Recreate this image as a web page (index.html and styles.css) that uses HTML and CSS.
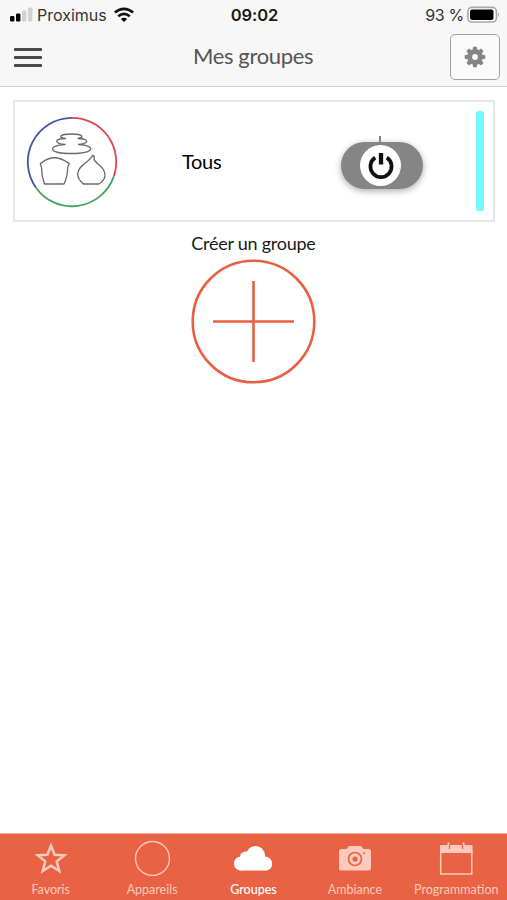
FILE: index.html
```html
<!DOCTYPE html>
<html lang="fr">
<head>
<meta charset="utf-8">
<title>Mes groupes</title>
<link rel="stylesheet" href="styles.css">
</head>
<body>
<header class="header">
  <div class="status">
    <div class="carrier">
      <svg width="25" height="16" viewBox="0 0 25 16"><rect x="1" y="9" width="4.4" height="5.5" rx="1.2"/><rect x="7" y="6.5" width="4.4" height="8" rx="1.2"/><rect class="dim" x="13" y="3.5" width="4.4" height="11" rx="1.2"/><rect class="dim" x="19" y="0.5" width="4.4" height="14" rx="1.2"/></svg>
      <span class="carrier-name">Proximus</span>
      <svg class="wifi" width="20" height="16" viewBox="0 0 20 16"><g fill="none" stroke="#111" stroke-width="2.7"><path d="M.9 5.500Q10-1.900 19.100 5.500"/><path d="M4.200 9.300Q10 4.600 15.800 9.300"/></g><path d="M7 12Q10 9.600 13 12L10 15Z"/></svg>
    </div>
    <span class="clock">09:02</span>
    <div class="battery">
      <span class="percent">93 %</span>
      <svg width="33" height="18" viewBox="0 0 33 18"><rect x=".9" y="1.4" width="28.5" height="14.6" rx="4" fill="#fff" stroke="#a8a8a8" stroke-width="1.6"/><rect x="3" y="3.4" width="23.5" height="10.7" rx="2" fill="#000"/><path d="M31 6.2q2 2.5 0 5Z" fill="#a8a8a8"/></svg>
    </div>
  </div>
  <div class="nav">
    <div class="menu"><i></i><i></i><i></i></div>
    <h1 class="title">Mes groupes</h1>
    <div class="settings">
      <svg width="22" height="22" viewBox="-11 -11 22 22"><g fill="#858585"><path id="tooth" d="M-2.600-6L-1.800-10.300H1.800L2.600-6V6L1.800 10.300H-1.800L-2.600 6Z"/><use href="#tooth" transform="rotate(45)"/><use href="#tooth" transform="rotate(90)"/><use href="#tooth" transform="rotate(135)"/><circle r="7.800"/></g><circle r="2.900" fill="#fafafa"/></svg>
    </div>
  </div>
</header>
<main class="content">
  <section class="card">
    <svg class="lamps" width="92" height="92" viewBox="0 0 92 92" fill="none">
      <g stroke-width="1.8"><path stroke="#df4653" d="M46 1.8A44.2 44.2 0 0 1 87.8 60.4"/><path stroke="#45a35b" d="M87.8 60.4A44.2 44.2 0 0 1 9.8 71.4"/><path stroke="#4653a6" d="M9.8 71.4A44.2 44.2 0 0 1 46 1.8"/></g>
      <g stroke="#6a6a6a" stroke-width="1.3" stroke-linejoin="round"><path d="M39 22.5C32 21.5 33 18 45.5 18S58 21.5 52 22.5C63 23 64 27 53 28.5C70 29.500 69 37.500 45.500 37.500S21 29.500 39 28.500C28 27 28 23 39 22.500M35 22.500H40M52 22.500H57M34 28.500H39M52 28.500H58"/><path d="M14.500 49Q14 47 16 46.500Q28 37 41.500 46.500Q44 47 42.500 49.500L41.700 51Q41.500 61 38 68H18.500Q15.500 60 15.500 51Z"/><path d="M57.500 68Q51.500 63 51.700 58C52 49 63 47 66.500 39.500Q69 39.500 68 43C69 48 79 50 79 59Q79 64 73 68Z"/></g>
    </svg>
    <span class="name">Tous</span>
    <div class="toggle"><div class="knob"><svg width="28" height="28" viewBox="0 0 28 28" fill="none" stroke="#111" stroke-width="3.700"><path d="M8.200 5.600A10.600 10.600 0 1 0 19.800 5.600"/><path d="M14 1V12.500" stroke-width="4.300"/></svg></div></div>
    <div class="level"></div>
  </section>
  <section class="create">
    <span class="create-label">Créer un groupe</span>
    <svg width="126" height="126" viewBox="0 0 126 126" fill="none" stroke="#e86042" stroke-width="2.600"><circle cx="62.500" cy="62.500" r="60.800"/><path d="M22 62.500H103M62.500 22V103"/></svg>
  </section>
</main>
<nav class="tabs">
  <div class="tab"><svg width="36" height="36" viewBox="0 0 36 36"><path d="M18 5.500L21.600 14.800L31.300 15.300L23.700 21.400L26.300 31L18 25.700L9.700 31L12.300 21.400L4.700 15.300L14.400 14.800Z" fill="none" stroke="#fbcabc" stroke-width="2.500"/></svg><span>Favoris</span></div>
  <div class="tab"><svg width="36" height="36" viewBox="0 0 36 36"><circle cx="18.500" cy="18.500" r="17" fill="none" stroke="#fbcabc" stroke-width="1.400"/></svg><span>Appareils</span></div>
  <div class="tab active"><svg width="40" height="36" viewBox="0 0 40 36"><g fill="#fff"><rect x="1.500" y="18" width="37.500" height="12.500" rx="6.250"/><circle cx="8" cy="23.500" r="7"/><circle cx="12.500" cy="17" r="5.500"/><circle cx="22.500" cy="15.500" r="9.500"/><circle cx="32" cy="23.500" r="7"/></g></svg><span>Groupes</span></div>
  <div class="tab"><svg width="36" height="36" viewBox="0 0 36 36"><path fill="#fbcabc" d="M4.500 9H9.500L12 6H24L26.500 9H31.500Q34 9 34 11.500V28Q34 30.500 31.500 30.500H4.500Q2 30.500 2 28V11.500Q2 9 4.500 9Z"/><circle cx="18" cy="19" r="6.500" fill="none" stroke="#e96244" stroke-width="1.700"/><circle cx="18" cy="19" r="2.600" fill="#e96244"/><circle cx="27" cy="13" r="1" fill="#e96244"/></svg><span>Ambiance</span></div>
  <div class="tab"><svg width="36" height="36" viewBox="0 0 36 36"><path d="M2 5H34.500V13H2Z" fill="#fbcabc"/><path d="M2.700 10V34H33.800V10" fill="none" stroke="#fbcabc" stroke-width="1.500"/><path d="M10.500 2.500V8M25.500 2.500V8" stroke="#fbcabc" stroke-width="2"/><path d="M11.500 4.500V9M24.500 4.500V9" stroke="#e96244" stroke-width="1.300"/></svg><span>Programmation</span></div>
</nav>
</body>
</html>
```
FILE: styles.css
```css
* { box-sizing: border-box; }
body { margin: 0; height: 900px; display: flex; flex-direction: column; background: #fff; color: #191919; font-family: Lato, Carlito, sans-serif; overflow: hidden; }
svg { display: block; flex: none; }
.header { height: 87px; background: #f7f7f7; border-bottom: 1px solid #d1d1d1; }
.status { height: 30px; display: grid; grid-template-columns: 1fr auto 1fr; padding: 0 7px 0 9px; align-items: center; font-family: Inter, sans-serif; font-size: 16px; }
.carrier, .battery { display: flex; align-items: center; }
.carrier-name { margin-left: 3px; color: #333; }
.wifi { margin-left: 7px; }
.dim { fill: #d2d2d2; }
.clock { font-weight: 600; font-size: 16.500px; letter-spacing: -0.1px; }
.battery { justify-content: flex-end; gap: 3px; color: #333; }
.percent { letter-spacing: -0.3px; }
.nav { height: 56px; padding: 4px 7px 0 14px; display: grid; grid-template-columns: 51px 1fr 50px; }
.menu { display: flex; flex-direction: column; gap: 5px; padding-top: 14px; }
.menu i { width: 28px; height: 3px; background: #4b4b4b; border-radius: 1px; }
.title { margin: 7px 0 0 -9px; text-align: center; font-weight: 400; font-size: 22px; letter-spacing: -0.35px; line-height: 30px; color: #555; }
.settings { width: 50px; height: 46px; border: 1.500px solid #a2a2a2; border-radius: 5px; display: flex; align-items: center; justify-content: center; background: #fafafa; }
.content { flex: 1; padding: 13px 12px 0 13px; }
.card { height: 122px; border: 2px solid #e6e6e6; display: flex; align-items: center; padding: 0 9px 0 11px; }
.lamps { margin-top: 1px; }
.name { width: 159px; margin-left: 64px; color: #000; font-size: 20px; letter-spacing: -0.3px; line-height: 24px; }
.toggle { position: relative; width: 82px; height: 47px; margin-top: 9px; border-radius: 24px; background: #858585; display: flex; justify-content: center; align-items: center; box-shadow: 0 2px 7px #0005; }
.toggle::before { content: ""; position: absolute; left: 38px; top: -6px; width: 2px; height: 7px; background: #858585; }
.knob { width: 41px; height: 41px; margin-left: -3px; border-radius: 50%; background: #fff; display: flex; align-items: center; justify-content: center; }
.level { width: 8px; height: 100px; margin-left: auto; border-radius: 2px; background: #71fbfd; }
.create { display: flex; flex-direction: column; align-items: center; padding: 9px 1px 0 0; }
.create-label { font-size: 18px; letter-spacing: -0.25px; line-height: 24px; margin-bottom: 4px; }
.tabs { height: 67px; border-top: 1px solid #f4ac9a; background: #e96244; display: grid; grid-template-columns: repeat(5, 1fr); color: #fbcabc; }
.tab { display: flex; flex-direction: column; align-items: center; padding-top: 6px; font-size: 12.500px; }
.tab span { line-height: 16px; margin-top: 6px; white-space: nowrap; }
.active { color: #fff; font-weight: 500; }
```
